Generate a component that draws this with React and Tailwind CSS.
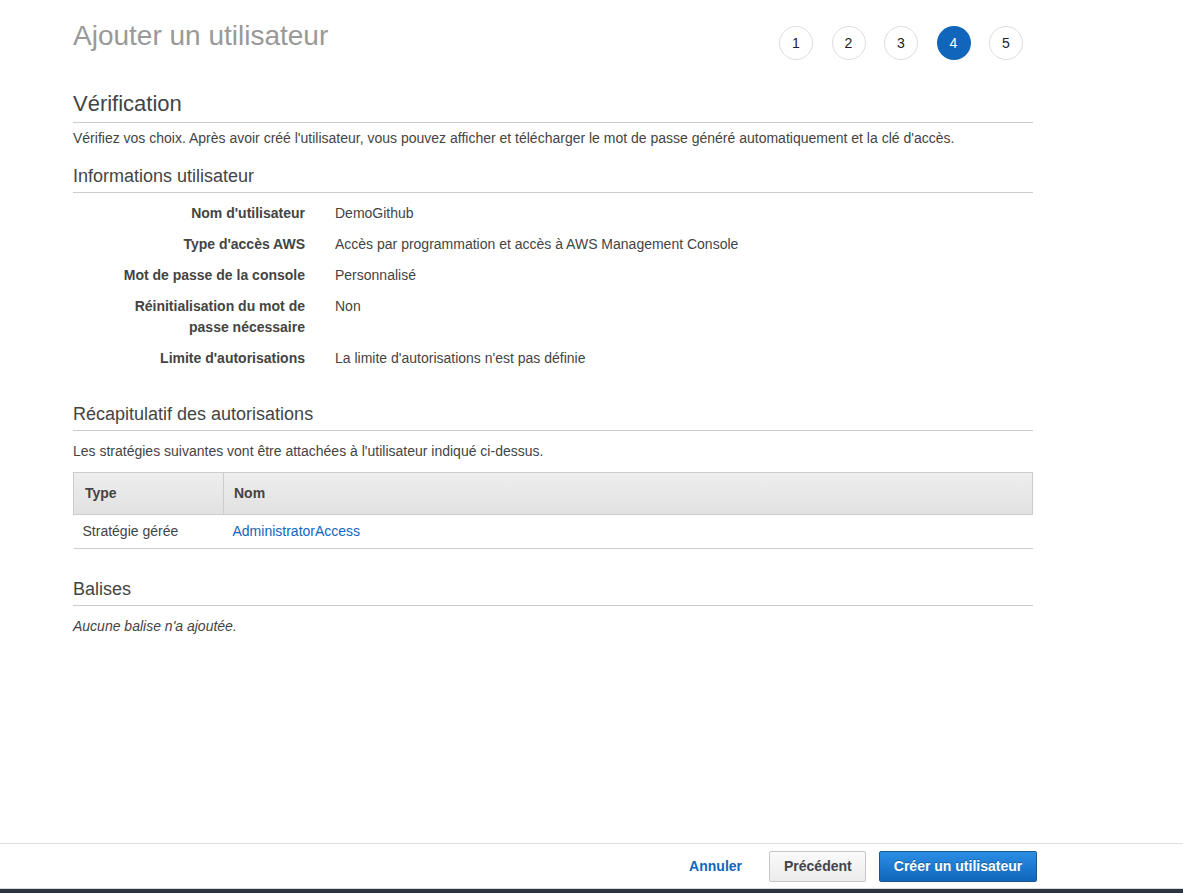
import { useState } from "react";

const steps = [1, 2, 3, 4, 5];

const userInfo = [
  { label: "Nom d'utilisateur", value: "DemoGithub" },
  { label: "Type d'accès AWS", value: "Accès par programmation et accès à AWS Management Console" },
  { label: "Mot de passe de la console", value: "Personnalisé" },
  { label: "Réinitialisation du mot de passe nécessaire", value: "Non" },
  { label: "Limite d'autorisations", value: "La limite d'autorisations n'est pas définie" },
];

const SectionTitle = ({ children, className = "" }) => (
  <h2 className={`text-[18px] leading-[24px] text-[#444] pt-[1px] pb-[4px] border-b border-[#ccc] ${className}`}>
    {children}
  </h2>
);

const App = () => {
  const [current] = useState(4);

  return (
    <div
      className="h-[893px] flex flex-col bg-white text-[#444] text-[14px]"
      style={{ fontFamily: '"Liberation Sans", Arial, sans-serif' }}
    >
      <main className="flex-1 pl-[73px]">
        <div className="w-[960px]">
          {/* Header */}
          <div className="flex justify-between items-start">
            <h1 className="text-[28px] leading-[32px] text-[#999] pt-[20px]">Ajouter un utilisateur</h1>
            <div className="flex gap-[18.5px] mt-[26px] mr-[10px]">
              {steps.map((s) =>
                s === current ? (
                  <div
                    key={s}
                    className="w-[34px] h-[34px] rounded-full bg-[#1166bb] text-white flex items-center justify-center"
                  >
                    {s}
                  </div>
                ) : (
                  <div
                    key={s}
                    className="w-[34px] h-[34px] rounded-full border border-[#ddd] text-[#222] flex items-center justify-center"
                  >
                    {s}
                  </div>
                )
              )}
            </div>
          </div>

          {/* Vérification */}
          <h2 className="mt-[29px] text-[22px] leading-[28px] text-[#444] pt-[1px] pb-[4px] border-b border-[#ccc]">
            Vérification
          </h2>
          <p className="mt-[5px] leading-[20px]">
            Vérifiez vos choix. Après avoir créé l'utilisateur, vous pouvez afficher et télécharger le mot de passe
            généré automatiquement et la clé d'accès.
          </p>

          {/* Informations utilisateur */}
          <SectionTitle className="mt-[15px]">Informations utilisateur</SectionTitle>
          <div className="mt-[5px]">
            {userInfo.map((row) => (
              <div key={row.label} className="flex py-[5px] leading-[21px]">
                <div className="w-[232px] text-right font-bold pl-[50px]">{row.label}</div>
                <div className="pl-[30px]">{row.value}</div>
              </div>
            ))}
          </div>

          {/* Récapitulatif */}
          <SectionTitle className="mt-[27px]">Récapitulatif des autorisations</SectionTitle>
          <p className="mt-[10px] leading-[20px]">Les stratégies suivantes vont être attachées à l'utilisateur indiqué ci-dessus.</p>
          <table className="mt-[11px] w-full border-collapse text-left">
            <thead>
              <tr className="bg-gradient-to-b from-[#eeeeee] to-[#e1e1e1]">
                <th className="w-[150px] h-[42px] border border-[#ccc] pl-[11px] font-bold">Type</th>
                <th className="h-[42px] border border-[#ccc] pl-[10px] font-bold">Nom</th>
              </tr>
            </thead>
            <tbody>
              <tr className="border-b border-[#ccc]">
                <td className="h-[34px] pl-[9px]">Stratégie gérée</td>
                <td className="h-[34px] pl-[9px]">
                  <a href="#" className="text-[#1166bb]">AdministratorAccess</a>
                </td>
              </tr>
            </tbody>
          </table>

          {/* Balises */}
          <SectionTitle className="mt-[27px]">Balises</SectionTitle>
          <p className="mt-[10px] leading-[20px] italic">Aucune balise n'a ajoutée.</p>
        </div>
      </main>

      {/* Footer */}
      <footer className="h-[46px] border-t border-[#e0e0e0] border-b border-b-[#d5dbdb] flex items-center justify-end pr-[146px] font-bold">
        <a href="#" className="text-[#1166bb] mr-[27px]">Annuler</a>
        <button className="h-[31px] px-[14px] w-[97px] rounded-[2px] border border-[#c6c6c6] bg-gradient-to-b from-[#fafafa] to-[#ebebeb] text-[#444]">
          Précédent
        </button>
        <button className="ml-[13px] h-[31px] w-[158px] rounded-[2px] border border-[#19558f] bg-gradient-to-b from-[#2b8ee5] to-[#1066bb] text-white [text-shadow:0_-1px_0_rgba(0,0,0,0.3)]">
          Créer un utilisateur
        </button>
      </footer>
      <div className="h-[4px] bg-[#2b3440]" />
    </div>
  );
};

export default App;
